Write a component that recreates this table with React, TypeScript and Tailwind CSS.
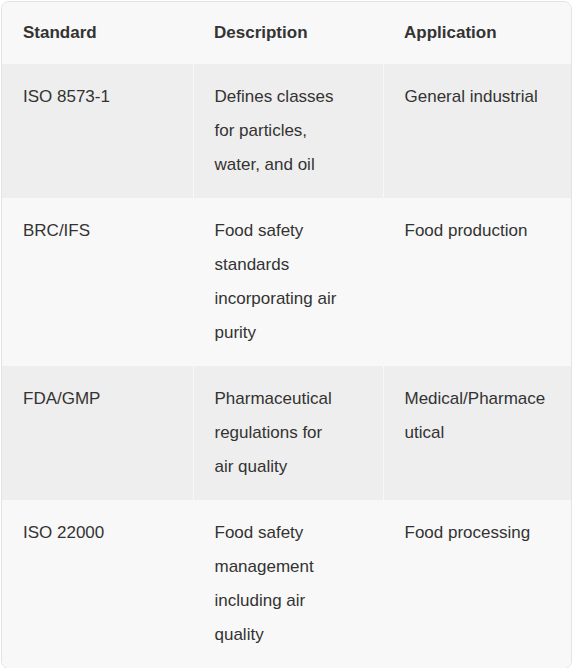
const rows = [
  {
    standard: 'ISO 8573-1',
    description: ['Defines classes', 'for particles,', 'water, and oil'],
    application: 'General industrial',
  },
  {
    standard: 'BRC/IFS',
    description: ['Food safety', 'standards', 'incorporating air', 'purity'],
    application: 'Food production',
  },
  {
    standard: 'FDA/GMP',
    description: ['Pharmaceutical', 'regulations for', 'air quality'],
    application: 'Medical/Pharmaceutical',
  },
  {
    standard: 'ISO 22000',
    description: ['Food safety', 'management', 'including air', 'quality'],
    application: 'Food processing',
  },
];

export default function App() {
  return (
    <div className="min-h-screen bg-white pl-px pt-px" style={{ fontFamily: '"Liberation Sans", Arial, sans-serif' }}>
      <div className="w-[571px] overflow-hidden rounded-lg border border-[#e3e3e3]">
        <table className="w-full table-fixed text-[17px] leading-[34px] text-[#333333]">
          <colgroup>
            <col className="w-[191px]" />
            <col className="w-[190px]" />
            <col />
          </colgroup>
          <thead>
            <tr className="bg-[#f8f8f8]">
              <th className="px-[21px] py-[14px] text-left font-bold">Standard</th>
              <th className="px-[21px] py-[14px] text-left font-bold">Description</th>
              <th className="px-[21px] py-[14px] text-left font-bold">Application</th>
            </tr>
          </thead>
          <tbody>
            {rows.map((row, index) => (
              <tr key={row.standard} className={index % 2 === 0 ? 'bg-[#eeeeee]' : 'bg-[#f8f8f8]'}>
                <td className="border-r border-[#f8f8f8] px-[21px] py-4 align-top">{row.standard}</td>
                <td className="border-r border-[#f8f8f8] px-[21px] py-4 align-top">
                  {row.description.map((line) => (
                    <span key={line} className="block">{line}</span>
                  ))}
                </td>
                <td className="px-[21px] py-4 align-top break-words">{row.application}</td>
              </tr>
            ))}
          </tbody>
        </table>
      </div>
    </div>
  );
}
